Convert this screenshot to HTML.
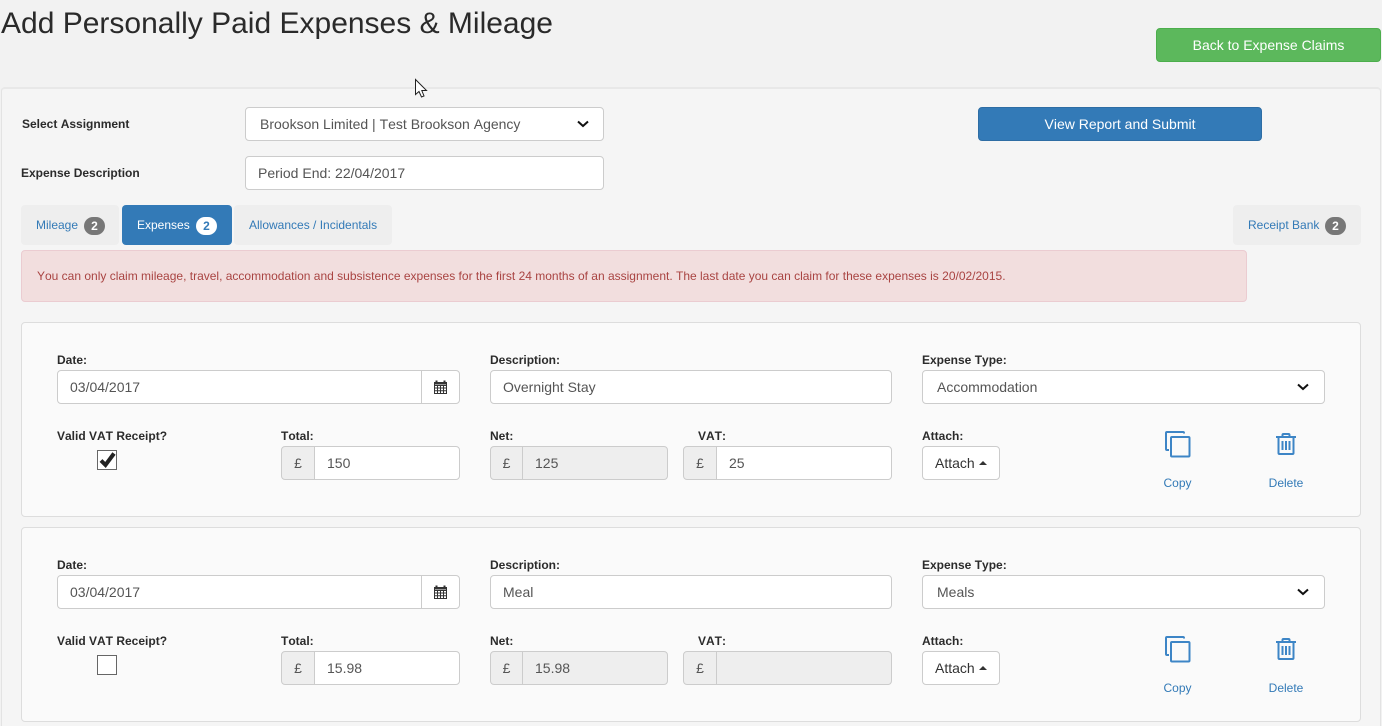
<!DOCTYPE html>
<html><head><meta charset="utf-8"><style>
html,body{margin:0;padding:0;width:1382px;height:726px;overflow:hidden;background:#f2f2f2;font-family:"Liberation Sans",Arial,sans-serif;color:#333;font-kerning:none}
#w{position:absolute;left:0;top:0;width:1382px;height:726px;overflow:hidden}
.a{position:absolute;box-sizing:border-box;white-space:nowrap}
.t{position:absolute;white-space:nowrap;line-height:16px}
.lb{font-size:12px;font-weight:bold;color:#2b2b2b}
.in{background:#fff;border:1px solid #ccc;border-radius:4px;font-size:14px;color:#555;height:34px;line-height:32px}
.ad{background:#eee;border:1px solid #ccc;border-radius:4px 0 0 4px;font-size:14px;color:#555;height:34px;line-height:32px;text-align:center}
.dis{background:#eee}
.tab{background:#eee;border-radius:4px;height:40px;font-size:12px;color:#337ab7;line-height:41px}
.bd{position:absolute;width:21px;height:18px;border-radius:10px;background:#777;color:#fff;font-size:12px;font-weight:bold;text-align:center;line-height:18px}
.btn{border-radius:4px;color:#fff;font-size:14px;text-align:center;height:34px;line-height:32px}
.panel{background:#fafafa;border:1px solid #ddd;border-radius:4px}
.lnk{color:#337ab7;font-size:12px;text-align:center;width:80px}
svg{position:absolute;overflow:visible}
</style></head><body><div id="w">

<div class="t" style="left:1px;top:7px;font-size:30px;line-height:34px;color:#2a2a2a">Add Personally Paid Expenses &amp; Mileage</div>
<div class="a btn" style="left:1156px;top:28px;width:225px;background:#5cb85c;border:1px solid #4cae4c">Back to Expense Claims</div>

<div class="a" style="left:1px;top:87px;width:1380px;height:660px;background:#f5f5f5;border:1px solid #e3e3e3;border-top:2px solid #e8e8e8;border-radius:4px"></div>

<svg style="left:415px;top:79px" width="14" height="20" viewBox="0 0 14 20"><path d="M.5.5V15.500L4 12.500L6.500 18L9 17L6.800 11.500H11.500Z" fill="#fff" stroke="#222" stroke-width="1"/></svg>

<div class="t lb" style="left:22px;top:116px">Select Assignment</div>
<div class="a in" style="left:245px;top:107px;width:359px;padding-left:14px">Brookson Limited | Test Brookson Agency</div>
<svg style="left:577px;top:120px" width="12" height="8" viewBox="0 0 12 8"><path d="M1 1.500L6 6L11 1.500" fill="none" stroke="#111" stroke-width="2"/></svg>
<div class="a btn" style="left:978px;top:107px;width:284px;background:#337ab7;border:1px solid #2e6da4">View Report and Submit</div>

<div class="t lb" style="left:21px;top:165px">Expense Description</div>
<div class="a in" style="left:245px;top:156px;width:359px;padding-left:12px">Period End: 22/04/2017</div>

<div class="a tab" style="left:21px;top:205px;width:98px;padding-left:15px">Mileage</div>
<div class="bd" style="left:84px;top:217px">2</div>
<div class="a tab" style="left:122px;top:205px;width:110px;padding-left:15px;background:#337ab7;color:#fff">Expenses</div>
<div class="bd" style="left:196px;top:217px;background:#fff;color:#337ab7">2</div>
<div class="a tab" style="left:234px;top:205px;width:158px;padding-left:15px">Allowances / Incidentals</div>
<div class="a tab" style="left:1233px;top:205px;width:128px;padding-left:15px">Receipt Bank</div>
<div class="bd" style="left:1325px;top:217px">2</div>

<div class="a" style="left:21px;top:250px;width:1226px;height:52px;background:#f2dede;border:1px solid #ebccd1;border-radius:4px;color:#a94442;font-size:12px;line-height:51px;padding-left:15px">You can only claim mileage, travel, accommodation and subsistence expenses for the first 24 months of an assignment. The last date you can claim for these expenses is 20/02/2015.</div>

<!-- Panel 1 -->
<div class="a panel" style="left:21px;top:322px;width:1340px;height:195px"></div>
<div class="t lb" style="left:57px;top:352px">Date:</div>
<div class="a in" style="left:57px;top:370px;width:403px;padding-left:12px">03/04/2017</div>
<div class="a" style="left:421px;top:371px;width:1px;height:32px;background:#ccc"></div>
<svg style="left:434px;top:380px" width="13" height="14" viewBox="0 0 13 14"><path d="M.5 2.500H12.500V13.500H.5ZM.5 5.500H12.500M.5 8H12.500M.5 10.800H12.500M3.500 5.500V13.500M6.500 5.500V13.500M9.500 5.500V13.500" fill="none" stroke="#333" stroke-width="1"/><path d="M2.500 0.500V3.500M10.500 0.500V3.500" stroke="#333" stroke-width="2"/><path d="M.5 3.500H12.500" stroke="#333" stroke-width="2"/></svg>
<div class="t lb" style="left:490px;top:352px">Description:</div>
<div class="a in" style="left:490px;top:370px;width:402px;padding-left:12px">Overnight Stay</div>
<div class="t lb" style="left:922px;top:352px">Expense Type:</div>
<div class="a in" style="left:922px;top:370px;width:403px;padding-left:14px">Accommodation</div>
<svg style="left:1297px;top:383px" width="12" height="8" viewBox="0 0 12 8"><path d="M1 1.500L6 6L11 1.500" fill="none" stroke="#111" stroke-width="2"/></svg>

<div class="t lb" style="left:57px;top:428px">Valid VAT Receipt?</div>
<div class="a" style="left:97px;top:450px;width:20px;height:20px;background:#fff;border:1px solid #666"></div>
<svg style="left:99px;top:451px" width="17" height="17" viewBox="0 0 17 17"><path d="M2 9.500L6.500 14L15 2.500" fill="none" stroke="#222" stroke-width="4"/></svg>
<div class="t lb" style="left:281px;top:428px">Total:</div>
<div class="a ad" style="left:281px;top:446px;width:34px">£</div>
<div class="a in" style="left:314px;top:446px;width:146px;padding-left:12px;border-radius:0 4px 4px 0">150</div>
<div class="t lb" style="left:490px;top:428px">Net:</div>
<div class="a ad" style="left:490px;top:446px;width:33px">£</div>
<div class="a in dis" style="left:522px;top:446px;width:146px;padding-left:12px;border-radius:0 4px 4px 0">125</div>
<div class="t lb" style="left:698px;top:428px">VAT:</div>
<div class="a ad" style="left:683px;top:446px;width:34px">£</div>
<div class="a in" style="left:716px;top:446px;width:176px;padding-left:12px;border-radius:0 4px 4px 0">25</div>
<div class="t lb" style="left:922px;top:428px">Attach:</div>
<div class="a in" style="left:922px;top:446px;width:78px;padding-left:12px;color:#333">Attach</div>
<svg style="left:979px;top:461px" width="8" height="4" viewBox="0 0 8 4"><path d="M0 4L4 0L8 4Z" fill="#333"/></svg>
<svg style="left:1165px;top:431px" width="26" height="27" viewBox="0 0 26 27"><path d="M19 2.500V2A1 1 0 0 0 18 1H2A1 1 0 0 0 1 2V18A1 1 0 0 0 2 19H4" fill="none" stroke="#3d85c6" stroke-width="2"/><rect x="6" y="6" width="18.500" height="19.500" rx="1" fill="none" stroke="#3d85c6" stroke-width="2"/></svg>
<svg style="left:1276px;top:433px" width="20" height="22" viewBox="0 0 20 22"><path d="M0 4H20M6.500 4V2A1 1 0 0 1 7.500 1H12.500A1 1 0 0 1 13.500 2V4M2.500 4V20A1 1 0 0 0 3.500 21H16.500A1 1 0 0 0 17.500 20V4M6.500 8V17M10 8V17M13.500 8V17" fill="none" stroke="#3d85c6" stroke-width="2"/></svg>
<div class="t lnk" style="left:1137.500px;top:475px">Copy</div>
<div class="t lnk" style="left:1246px;top:475px">Delete</div>

<!-- Panel 2 -->
<div class="a panel" style="left:21px;top:527px;width:1340px;height:195px"></div>
<div class="t lb" style="left:57px;top:557px">Date:</div>
<div class="a in" style="left:57px;top:575px;width:403px;padding-left:12px">03/04/2017</div>
<div class="a" style="left:421px;top:576px;width:1px;height:32px;background:#ccc"></div>
<svg style="left:434px;top:585px" width="13" height="14" viewBox="0 0 13 14"><path d="M.5 2.500H12.500V13.500H.5ZM.5 5.500H12.500M.5 8H12.500M.5 10.800H12.500M3.500 5.500V13.500M6.500 5.500V13.500M9.500 5.500V13.500" fill="none" stroke="#333" stroke-width="1"/><path d="M2.500 0.500V3.500M10.500 0.500V3.500" stroke="#333" stroke-width="2"/><path d="M.5 3.500H12.500" stroke="#333" stroke-width="2"/></svg>
<div class="t lb" style="left:490px;top:557px">Description:</div>
<div class="a in" style="left:490px;top:575px;width:402px;padding-left:12px">Meal</div>
<div class="t lb" style="left:922px;top:557px">Expense Type:</div>
<div class="a in" style="left:922px;top:575px;width:403px;padding-left:14px">Meals</div>
<svg style="left:1297px;top:588px" width="12" height="8" viewBox="0 0 12 8"><path d="M1 1.500L6 6L11 1.500" fill="none" stroke="#111" stroke-width="2"/></svg>

<div class="t lb" style="left:57px;top:633px">Valid VAT Receipt?</div>
<div class="a" style="left:97px;top:655px;width:20px;height:20px;background:#fff;border:1px solid #666"></div>
<div class="t lb" style="left:281px;top:633px">Total:</div>
<div class="a ad" style="left:281px;top:651px;width:34px">£</div>
<div class="a in" style="left:314px;top:651px;width:146px;padding-left:12px;border-radius:0 4px 4px 0">15.98</div>
<div class="t lb" style="left:490px;top:633px">Net:</div>
<div class="a ad" style="left:490px;top:651px;width:33px">£</div>
<div class="a in dis" style="left:522px;top:651px;width:146px;padding-left:12px;border-radius:0 4px 4px 0">15.98</div>
<div class="t lb" style="left:698px;top:633px">VAT:</div>
<div class="a ad" style="left:683px;top:651px;width:34px">£</div>
<div class="a in dis" style="left:716px;top:651px;width:176px;padding-left:12px;border-radius:0 4px 4px 0"></div>
<div class="t lb" style="left:922px;top:633px">Attach:</div>
<div class="a in" style="left:922px;top:651px;width:78px;padding-left:12px;color:#333">Attach</div>
<svg style="left:979px;top:666px" width="8" height="4" viewBox="0 0 8 4"><path d="M0 4L4 0L8 4Z" fill="#333"/></svg>
<svg style="left:1165px;top:636px" width="26" height="27" viewBox="0 0 26 27"><path d="M19 2.500V2A1 1 0 0 0 18 1H2A1 1 0 0 0 1 2V18A1 1 0 0 0 2 19H4" fill="none" stroke="#3d85c6" stroke-width="2"/><rect x="6" y="6" width="18.500" height="19.500" rx="1" fill="none" stroke="#3d85c6" stroke-width="2"/></svg>
<svg style="left:1276px;top:638px" width="20" height="22" viewBox="0 0 20 22"><path d="M0 4H20M6.500 4V2A1 1 0 0 1 7.500 1H12.500A1 1 0 0 1 13.500 2V4M2.500 4V20A1 1 0 0 0 3.500 21H16.500A1 1 0 0 0 17.500 20V4M6.500 8V17M10 8V17M13.500 8V17" fill="none" stroke="#3d85c6" stroke-width="2"/></svg>
<div class="t lnk" style="left:1137.500px;top:680px">Copy</div>
<div class="t lnk" style="left:1246px;top:680px">Delete</div>

</div></body></html>
